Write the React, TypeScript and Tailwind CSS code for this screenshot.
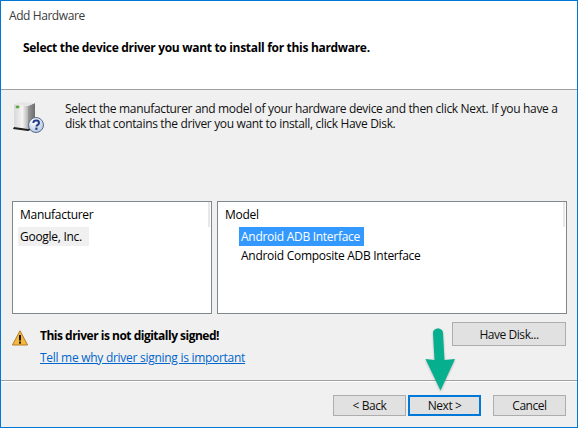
const font = "[font-family:'Open_Sans','Noto_Sans',sans-serif]";

function ServerIcon() {
  return (
    <svg width="34" height="34" viewBox="0 0 34 34" className="shrink-0">
      <defs>
        <linearGradient id="front" x1="0" x2="1" y1="0" y2="0">
          <stop offset="0" stopColor="#d8d8d8" />
          <stop offset="0.6" stopColor="#f4f4f4" />
          <stop offset="1" stopColor="#b4b4b4" />
        </linearGradient>
        <linearGradient id="side" x1="0" x2="1" y1="0" y2="0">
          <stop offset="0" stopColor="#9a9a9a" />
          <stop offset="1" stopColor="#6c6c6c" />
        </linearGradient>
        <radialGradient id="help" cx="0.4" cy="0.3" r="0.8">
          <stop offset="0" stopColor="#ffffff" />
          <stop offset="1" stopColor="#aac0dc" />
        </radialGradient>
      </defs>
      <path d="M3 4 L17 6 L17 29 L3 27 Z" fill="url(#front)" />
      <path d="M17 6 L24 3 L24 25 L17 29 Z" fill="url(#side)" />
      <path d="M3 4 L10 2 L24 3 L17 6 Z" fill="#e6e6e6" />
      <ellipse cx="6.5" cy="7" rx="2" ry="1.4" fill="#5fa63c" />
      <path d="M2 29 L17 31 L25 28 L25 26 L17 29 L3 27 Z" fill="#1f1f1f" />
      <circle cx="25" cy="25" r="7.5" fill="url(#help)" stroke="#5a6d8c" strokeWidth="1" />
      <path d="M22.4 23 C22.4 19.8 28 19.8 28 23 C28 25 25.4 24.8 25.4 26.6" fill="none" stroke="#23398c" strokeWidth="2" />
      <rect x="24.3" y="27.6" width="2.2" height="2.2" fill="#23398c" />
    </svg>
  );
}

function WarnIcon() {
  return (
    <svg width="16" height="16" viewBox="0 0 16 16" className="shrink-0">
      <path d="M8 0.8 L15.6 15 L0.4 15 Z" fill="#f4b83f" stroke="#b17d22" strokeWidth="1" strokeLinejoin="round" />
      <rect x="7" y="5" width="2" height="5.6" fill="#1c1400" />
      <rect x="7" y="11.6" width="2" height="2" fill="#1c1400" />
    </svg>
  );
}

function Btn({ children, w, focus }: { children: string; w: string; focus?: boolean }) {
  return (
    <button className={`${w} h-[21px] flex items-center justify-center bg-[#e1e1e1] text-[12px] text-[#111] tracking-[-0.45px] ${focus ? "border-2 border-[#0078d7]" : "border border-[#adadad]"}`}>
      {children}
    </button>
  );
}

function ListBox({ w, title, children }: { w: string; title: string; children: React.ReactNode }) {
  return (
    <div className={`${w} h-[113px] relative bg-white border border-[#82878c] pl-[2px] pt-[1px]`}>
      <div className="h-[24px] pb-[2px] flex items-center pl-[5px] text-[12px] text-black">{title}</div>
      <div className="absolute top-0 right-[1px] w-[2px] h-[25px] bg-[#e8e8e8]" />
      {children}
    </div>
  );
}

export default function App() {
  return (
    <div className={`${font} w-[578px] h-[428px] bg-[#f0f0f0] border border-[#0078d7] flex flex-col relative overflow-hidden tracking-[-0.28px] text-[12px] leading-[15px]`}>
      <div className="h-[89px] bg-white border-b border-[#a0a0a0] shrink-0">
        <div className="pl-[8px] pt-[7px] text-[12px] text-[#3c3c3c] tracking-[-0.42px]">Add Hardware</div>
        <div className="pl-[22px] pt-[17px] font-bold text-[12px] text-black tracking-[-0.31px]">Select the device driver you want to install for this hardware.</div>
      </div>
      <div className="flex gap-[20px] pl-[10px] pt-[10px] h-[111px] shrink-0">
        <div><ServerIcon /></div>
        <div className="w-[500px] pt-[1px] text-[#111] text-[12px] tracking-[-0.335px]">
          Select the manufacturer and model of your hardware device and then click Next. If you have a disk that contains the driver you want to install, click Have Disk.
        </div>
      </div>
      <div className="flex gap-[5px] pl-[11px] shrink-0">
        <ListBox w="w-[200px]" title="Manufacturer">
          <div className="ml-[3px] h-[19px] w-[71px] flex items-center pl-[2px] bg-[#f0f0f0] text-black">Google, Inc.</div>
        </ListBox>
        <ListBox w="w-[350px]" title="Model">
          <div className="ml-[19px] h-[19px] w-[125px] flex items-center pl-[2px] bg-[#3399ff] text-white">Android ADB Interface</div>
          <div className="ml-[19px] h-[19px] flex items-center pl-[2px] text-black">Android Composite ADB Interface</div>
        </ListBox>
      </div>
      <div className="flex pl-[11px] pr-[11px] pt-[8px] h-[66px] shrink-0">
        <div className="pt-[8px] w-[28px]"><WarnIcon /></div>
        <div className="flex-1 flex flex-col pt-[6px]">
          <div className="font-bold text-black tracking-[-0.5px]">This driver is not digitally signed!</div>
          <a className="mt-[7px] text-[#0066cc] underline">Tell me why driver signing is important</a>
        </div>
        <Btn w="w-[114px] !h-[24px]">Have Disk...</Btn>
      </div>
      <div className="h-[2px] bg-[#a0a0a0] border-b border-white shrink-0" />
      <div className="flex items-center pl-[332px] pt-[13px]">
        <Btn w="w-[73px]">{"< Back"}</Btn>
        <div className="w-[2px]" />
        <Btn w="w-[73px]" focus>{"Next >"}</Btn>
        <div className="w-[12px]" />
        <Btn w="w-[73px]">Cancel</Btn>
      </div>
      <svg width="32" height="66" viewBox="0 0 32 66" className="absolute left-[424px] top-[326px] drop-shadow-[0_1px_1px_rgba(0,0,0,0.25)]">
        <path d="M8 6 C8 0 18 0 18 6 L19.5 33 L30 32 L15.5 63.5 L0.5 32 L9.5 33 Z" fill="#06b08e" />
      </svg>
    </div>
  );
}
